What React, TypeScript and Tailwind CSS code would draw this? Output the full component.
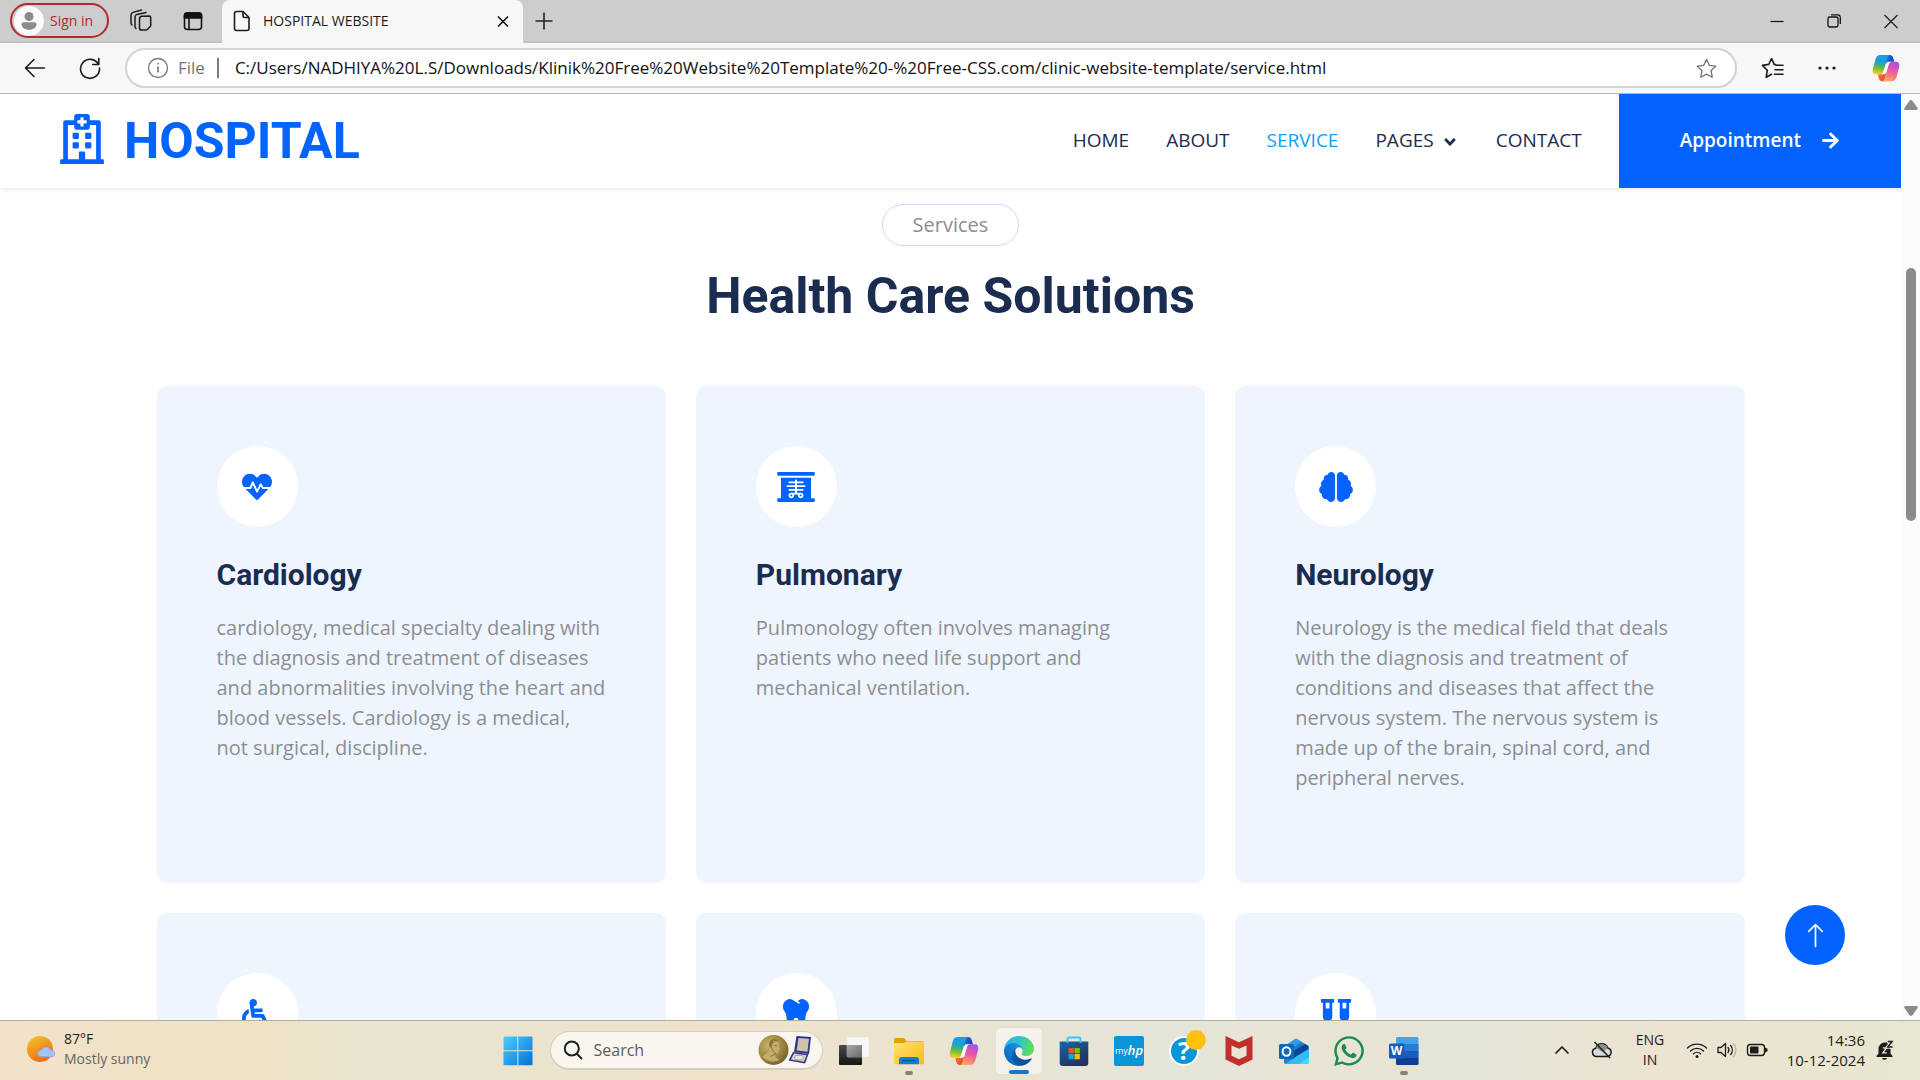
import React from "react";
import {
  FaRegHospital,
  FaHeartbeat,
  FaXRay,
  FaBrain,
  FaWheelchair,
  FaTooth,
  FaVials,
  FaArrowRight,
  FaAngleDown,
  FaWhatsapp,
} from "react-icons/fa";
import { BsArrowUp } from "react-icons/bs";

const ui = "font-['Open_Sans','Noto_Sans',sans-serif]";

function CopilotIcon({ id, className }: { id: string; className: string }) {
  return (
    <svg viewBox="0 0 32 32" className={className} aria-hidden="true">
      <defs>
        <linearGradient id={id + "a"} x1="0.5" y1="0" x2="0.35" y2="1">
          <stop offset="0" stopColor="#1a9df0" />
          <stop offset="0.35" stopColor="#1b9fd0" />
          <stop offset="0.65" stopColor="#5fb94d" />
          <stop offset="1" stopColor="#f6d20a" />
        </linearGradient>
        <linearGradient id={id + "b"} x1="0.7" y1="0" x2="0.4" y2="1">
          <stop offset="0" stopColor="#a44ff0" />
          <stop offset="0.5" stopColor="#ee5a9a" />
          <stop offset="1" stopColor="#ffa860" />
        </linearGradient>
        <linearGradient id={id + "c"} x1="0" y1="0" x2="1" y2="0.6">
          <stop offset="0" stopColor="#1387e6" />
          <stop offset="1" stopColor="#1f38c4" />
        </linearGradient>
        <linearGradient id={id + "d"} x1="0" y1="0" x2="1" y2="1">
          <stop offset="0" stopColor="#ff8a30" />
          <stop offset="1" stopColor="#dc3434" />
        </linearGradient>
      </defs>
      <path d="M17 1h3.500c1.900 0 3 1 3.600 2.900l1.400 5h-4.500c-2 0-3.200 1-3.800 3L15 7z" fill={`url(#${id}c)`} />
      <path d="M15 31h-3.500c-1.900 0-3-1-3.600-2.900l-1.400-5H11c2 0 3.200-1 3.800-3L17 25z" fill={`url(#${id}d)`} />
      <path d="M9.500 1h11.300c-1.600 0-2.500 1.200-3.100 3.200l-4.800 16.100c-.6 1.900-1.900 2.900-4 2.900H4.500C1 23.200.1 20 1.100 16.700l3-11.200C4.900 2.500 6.500 1 9.500 1z" fill={`url(#${id}a)`} />
      <path d="M22.500 31H11.200c1.600 0 2.500-1.200 3.100-3.200l4.800-16.100c.6-1.900 1.900-2.900 4-2.900h4.400c3.500 0 4.400 3.200 3.400 6.500l-3 11.200c-.8 3-2.400 4.500-5.400 4.500z" fill={`url(#${id}b)`} />
      <path d="M17.200 8.900h4.600c-1.400.4-2.200 1.400-2.700 2.900l-3.100 10.500-1.400.8h-3.300c1-.6 1.400-1.500 1.700-2.600z" fill="#fff" opacity="0.850" />
    </svg>
  );
}

function IconButton({ label, className = "", children }: { label: string; className?: string; children: React.ReactNode }) {
  return (
    <button type="button" aria-label={label} className={"flex shrink-0 items-center justify-center " + className}>
      {children}
    </button>
  );
}

function TabStrip() {
  return (
    <div className="flex h-[43px] shrink-0 items-stretch border-b-2 border-[#c2c2c2] bg-[#cdcdcd]">
      <div className="flex items-center pl-[10px]">
        <button type="button" className="flex h-[35px] w-[99px] items-center rounded-full border-2 border-[#b5292c] pl-[2px]">
          <span className="flex size-[30px] items-center justify-center rounded-full bg-[#fafafa]">
            <svg viewBox="0 0 20 20" className="size-[20px]" fill="#8b8b8b" aria-hidden="true">
              <circle cx="10" cy="5.500" r="4.500" />
              <path d="M2.500 13a1.800 1.800 0 0 1 1.800-1.800h11.400a1.800 1.800 0 0 1 1.800 1.800c0 3.400-3 5.800-7.500 5.800S2.500 16.400 2.500 13z" />
            </svg>
          </span>
          <span className="ml-[6px] whitespace-nowrap text-[14px] text-[#b5292c]">Sign in</span>
        </button>
        <IconButton label="Workspaces" className="ml-[20px] size-[24px]">
          <svg viewBox="0 0 24 24" className="size-[24px]" fill="none" stroke="#1b1b1b" strokeWidth="1.500" strokeLinejoin="round" strokeLinecap="round">
            <path d="M12.500 7.200l7.600-.2a1.600 1.600 0 0 1 1.600 1.600v7.700a2 2 0 0 1-.6 1.400l-2.800 2.800a2 2 0 0 1-1.400.6h-4.200a2.200 2.200 0 0 1-2.200-2.200V10a2.800 2.800 0 0 1 2-2.800z" />
            <path d="M7 19.500a2.500 2.500 0 0 1-1-2V8.200A3 3 0 0 1 8 5.400l9-2" />
            <path d="M3 16a2.500 2.500 0 0 1-1-2V6.200a3 3 0 0 1 2-2.800L12.500 1" />
          </svg>
        </IconButton>
        <IconButton label="Tab actions" className="ml-[28px] size-[24px]">
          <svg viewBox="0 0 24 24" className="size-[24px]" fill="none" stroke="#111" strokeWidth="1.600">
            <rect x="3.500" y="4" width="17" height="16.500" rx="3" />
            <path d="M3.500 9V6.500A2.500 2.500 0 0 1 6 4h12a2.500 2.500 0 0 1 2.500 2.500V9z" fill="#111" />
            <path d="M8 9v11" />
          </svg>
        </IconButton>
      </div>
      <div className="-mb-[2px] ml-[17px] flex w-[301px] items-center rounded-t-lg bg-[#f7f7f7] pr-[9px] pb-[2px] pl-[8px]">
        <svg viewBox="0 0 24 24" className="size-[24px]" fill="none" stroke="#1b1b1b" strokeWidth="1.600" strokeLinejoin="round" aria-hidden="true">
          <path d="M6.500 2.500H13l6 6v11a2 2 0 0 1-2 2H6.500a2 2 0 0 1-2-2v-15a2 2 0 0 1 2-2z" />
          <path d="M13 2.500v4a2 2 0 0 0 2 2h4" />
        </svg>
        <span className="ml-[9px] flex-1 whitespace-nowrap text-[14px] text-[#1b1b1b]">HOSPITAL WEBSITE</span>
        <IconButton label="Close tab" className="size-[22px]">
          <svg viewBox="0 0 22 22" className="size-[22px]" stroke="#111" strokeWidth="1.600">
            <path d="M6 6.500l10 10M16 6.500l-10 10" />
          </svg>
        </IconButton>
      </div>
      <IconButton label="New tab" className="ml-[9px] w-[24px]">
        <svg viewBox="0 0 24 24" className="size-[24px]" stroke="#222" strokeWidth="1.600">
          <path d="M3.500 12h17M12 3.500v17" />
        </svg>
      </IconButton>
      <div className="ml-auto flex pr-[1px]">
        <IconButton label="Minimise" className="w-[57px]">
          <svg viewBox="0 0 16 16" className="size-[16px]" stroke="#111" strokeWidth="1.200">
            <path d="M1.500 8.500h13" />
          </svg>
        </IconButton>
        <IconButton label="Restore" className="w-[57px]">
          <svg viewBox="0 0 16 16" className="size-[16px]" fill="none" stroke="#111" strokeWidth="1.300">
            <rect x="2" y="4" width="10" height="10" rx="1.800" />
            <path d="M5 1.800h6.500a2.800 2.800 0 0 1 2.800 2.800V11" />
          </svg>
        </IconButton>
        <IconButton label="Close window" className="w-[57px]">
          <svg viewBox="0 0 16 16" className="size-[16px]" stroke="#222" strokeWidth="1.300">
            <path d="M1.500 2l13 13M14.500 2l-13 13" />
          </svg>
        </IconButton>
      </div>
    </div>
  );
}

function AddressBar() {
  return (
    <div className="flex h-[51px] shrink-0 items-center border-b border-[#b9b9b9] bg-[#f7f7f7]">
      <IconButton label="Back" className="ml-[22px] size-[25px]">
        <svg viewBox="0 0 24 24" className="size-[24px]" fill="none" stroke="#1b1b1b" strokeWidth="1.600" strokeLinecap="round" strokeLinejoin="round">
          <path d="M21.500 12h-19M11 3.500L2.500 12l8.500 8.500" />
        </svg>
      </IconButton>
      <IconButton label="Refresh" className="ml-[30px] size-[25px]">
        <svg viewBox="0 0 24 24" className="size-[24px]" fill="none" stroke="#1b1b1b" strokeWidth="1.600" strokeLinecap="round" strokeLinejoin="round">
          <path d="M20.500 8.500A9.500 9.500 0 1 0 21.500 12M20.800 2.500v6h-6" />
        </svg>
      </IconButton>
      <div className="ml-[23px] flex h-[40px] flex-1 items-center rounded-full border-2 border-[#d2d2d2] bg-white pr-[17px] pl-[20px]">
        <svg viewBox="0 0 22 22" className="size-[22px] shrink-0" fill="none" stroke="#757575" strokeWidth="1.300" aria-hidden="true">
          <circle cx="11" cy="11" r="9.500" />
          <path d="M11 9.500v6M11 6v1.600" strokeWidth="1.600" />
        </svg>
        <span className="ml-[9px] text-[17px] text-[#757575]">File</span>
        <span className="mr-[16px] ml-[12px] h-[20px] w-[2px] bg-[#7d7d7d]" />
        <input
          aria-label="Address"
          readOnly
          value="C:/Users/NADHIYA%20L.S/Downloads/Klinik%20Free%20Website%20Template%20-%20Free-CSS.com/clinic-website-template/service.html"
          className="min-w-0 flex-1 bg-transparent text-[17px] text-[#111] outline-none"
        />
        <IconButton label="Add to favourites" className="size-[24px]">
          <svg viewBox="0 0 24 24" className="size-[23px]" fill="none" stroke="#757575" strokeWidth="1.400" strokeLinejoin="round">
            <path d="M12 2.500l2.900 6.200 6.800.9-5 4.700 1.300 6.800-6-3.300-6 3.300 1.300-6.800-5-4.700 6.800-.9z" />
          </svg>
        </IconButton>
      </div>
      <IconButton label="Favourites" className="ml-[24px] size-[24px]">
        <svg viewBox="0 0 24 24" className="size-[24px]" fill="none" stroke="#1b1b1b" strokeWidth="1.600" strokeLinejoin="round" strokeLinecap="round">
          <path d="M10.500 18.300l-5.300 3 1.100-7.100L1.500 9.400l6.300-1L10.500 2.500l2.700 5.900 1.500.2M15 9.200h7M14 13.700h8M13.500 18.300H22" />
        </svg>
      </IconButton>
      <IconButton label="Settings and more" className="ml-[29px] size-[26px]">
        <svg viewBox="0 0 24 24" className="size-[24px]" fill="#1b1b1b">
          <circle cx="5" cy="12" r="1.600" />
          <circle cx="12" cy="12" r="1.600" />
          <circle cx="19" cy="12" r="1.600" />
        </svg>
      </IconButton>
      <IconButton label="Copilot" className="mr-[20px] ml-[32px] size-[28px]">
        <CopilotIcon id="top" className="size-[28px]" />
      </IconButton>
    </div>
  );
}

const navLinks = ["HOME", "ABOUT", "SERVICE", "PAGES", "CONTACT"];

function SiteHeader() {
  return (
    <header className="relative flex h-[94px] items-stretch justify-between bg-white shadow-[0_2px_5px_rgba(0,0,0,0.08)]">
      <a href="#home" className="flex items-center gap-[20px] pl-[60px] text-[#0463fe]">
        <FaRegHospital className="mb-1 h-[50px] w-[44px]" />
        <span className="font-[Roboto,sans-serif] text-[50px] leading-[60px] font-bold">HOSPITAL</span>
      </a>
      <div className="flex items-stretch">
        <nav className="mr-[37px] flex items-center gap-[37px] pb-[2px] text-[19px] text-[#1b2c51]">
          {navLinks.map((link) => (
            <a key={link} href={"#" + link.toLowerCase()} className={link === "SERVICE" ? "text-[#0c9ffb]" : "flex items-center gap-[7px]"}>
              {link}
              {link === "PAGES" && <FaAngleDown className="mt-[3px] size-[18px]" />}
            </a>
          ))}
        </nav>
        <a href="#appointment" className="flex items-center gap-[20px] bg-[#0463fe] px-[61px] pb-[2px] text-[19px] font-semibold text-white">
          Appointment
          <FaArrowRight className="size-[19px]" />
        </a>
      </div>
    </header>
  );
}

type Service = { icon: React.ReactNode; title?: string; text?: string };

const services: Service[] = [
  {
    title: "Cardiology",
    text: "cardiology, medical specialty dealing with the diagnosis and treatment of diseases and abnormalities involving the heart and blood vessels. Cardiology is a medical, not surgical, discipline.",
    icon: <FaHeartbeat className="size-[30px]" />,
  },
  {
    title: "Pulmonary",
    text: "Pulmonology often involves managing patients who need life support and mechanical ventilation.",
    icon: <FaXRay className="h-[30px] w-[38px]" />,
  },
  {
    title: "Neurology",
    text: "Neurology is the medical field that deals with the diagnosis and treatment of conditions and diseases that affect the nervous system. The nervous system is made up of the brain, spinal cord, and peripheral nerves.",
    icon: <FaBrain className="h-[30px] w-[34px]" />,
  },
  { icon: <FaWheelchair className="size-[30px]" /> },
  { icon: <FaTooth className="size-[30px]" /> },
  { icon: <FaVials className="h-[30px] w-[38px]" /> },
];

function ServiceCard({ service }: { service: Service }) {
  return (
    <article className="rounded-[10px] bg-[#eef5ff] px-[60px] pt-[60px] pb-[90px]">
      <div className="flex size-[81px] items-center justify-center rounded-full bg-white text-[#0463fe]">{service.icon}</div>
      {service.title && (
        <h2 className="mt-[30px] font-[Roboto,sans-serif] text-[30px] leading-9 font-bold text-[#1b2c51]">{service.title}</h2>
      )}
      {service.text && <p className="mt-5 text-[20px] leading-[30px] text-[#8d8e92]">{service.text}</p>}
    </article>
  );
}

function Page() {
  return (
    <div className="relative flex min-h-0 flex-1 bg-white">
      <div className="min-w-0 flex-1 overflow-hidden">
        <SiteHeader />
        <main className="mx-auto flex max-w-[1588px] flex-col items-center">
          <p className="mt-4 rounded-full border border-[#c8dcfd] px-[30px] py-[5px] text-[20px] leading-[30px] text-[#8d8e92]">Services</p>
          <h1 className="mt-5 font-[Roboto,sans-serif] text-[50px] leading-[60px] font-bold text-[#1b2c51]">Health Care Solutions</h1>
          <section className="mt-[60px] grid w-full grid-cols-3 gap-[30px]">
            {services.map((s, i) => (
              <ServiceCard key={i} service={s} />
            ))}
          </section>
        </main>
      </div>
      <div className="flex w-[19px] shrink-0 flex-col items-center justify-between bg-[#fcfcfc] pt-[6px] pb-[4px]">
        <svg viewBox="0 0 14 10" className="h-[10px] w-[14px]" fill="#8b8b8b" aria-hidden="true">
          <path d="M7 0q1 0 1.600 1l5 7q.6 2-1.200 2H1.600Q-.2 10 .4 8l5-7Q6 0 7 0z" />
        </svg>
        <div className="mt-[158px] mb-auto h-[253px] w-[10px] rounded-full bg-[#8b8b8b]" />
        <svg viewBox="0 0 14 10" className="h-[10px] w-[14px]" fill="#8b8b8b" aria-hidden="true">
          <path d="M7 10q1 0 1.600-1l5-7q.6-2-1.200-2H1.600Q-.2 0 .4 2l5 7Q6 10 7 10z" />
        </svg>
      </div>
      <a href="#top" aria-label="Back to top" className="absolute right-[75px] bottom-[55px] flex size-[60px] items-center justify-center rounded-full bg-[#0463fe] text-white">
        <BsArrowUp className="size-[27px]" />
      </a>
    </div>
  );
}

function StartIcon() {
  return (
    <svg viewBox="0 0 30 30" className="size-[30px]" aria-hidden="true">
      <defs>
        <linearGradient id="start" x1="0" y1="0" x2="1" y2="1" gradientUnits="objectBoundingBox">
          <stop offset="0" stopColor="#4fcdff" />
          <stop offset="1" stopColor="#0071d4" />
        </linearGradient>
        <mask id="panes">
          <path d="M1.500.5h12.800v13.800H.5V1.500a1 1 0 0 1 1-1zM15.300.5h13.200a1 1 0 0 1 1 1v12.800H15.300zM.5 15.300h13.800v14H1.500a1 1 0 0 1-1-1zM15.300 15.300h14.200v13a1 1 0 0 1-1 1H15.300z" fill="#fff" />
        </mask>
      </defs>
      <rect width="30" height="30" fill="url(#start)" mask="url(#panes)" />
    </svg>
  );
}

function SearchArt() {
  return (
    <svg viewBox="0 0 56 32" className="h-[32px] w-[56px]" aria-hidden="true">
      <defs>
        <radialGradient id="medal" cx="0.35" cy="0.35" r="0.75">
          <stop offset="0" stopColor="#c9b36a" />
          <stop offset="0.6" stopColor="#9c8641" />
          <stop offset="1" stopColor="#6d5b26" />
        </radialGradient>
      </defs>
      <circle cx="16.500" cy="16" r="15" fill="url(#medal)" />
      <path d="M15 6.500c3-2 7-.5 7 3l-.5 3 1.800 2.700-1.700.8-.2 2.600c-.6 1.400-2.600.9-3.400 1.600l.6 3.200 4 2.400c-5 3-13 2-17-3.300 2.500-3 5.500-3.600 7.500-5.500-2-3-1.800-8.500 1.900-10.500z" fill="#c4ae6b" />
      <path d="M14.500 9c-1 3 .2 5 1 7l3.200 3.500-5 3M17.500 11.500h2.500" stroke="#7d6a32" strokeWidth="1" fill="none" />
      <path d="M12.500 8.500c1-4 7.500-5 9.500-.8l-5-.7-2 4-2 3c-1-1.700-1.100-3.800-.5-5.500z" fill="#8a7638" />
      <path d="M39.500 2l14.500 1-2 17-15-2z" fill="#2b3583" />
      <path d="M41.500 4l10.500.8-1.500 13-11-1.400z" fill="#cfc0b0" />
      <path d="M36 18l15.500 2-3.500 9.500-16.500-3z" fill="#2b3583" />
      <path d="M37 19.500l12.500 1.700-2.600 6.600-13-2.300z" fill="#d8d3cc" />
      <ellipse cx="42" cy="23.600" rx="4.500" ry="2.400" fill="#e9e4da" stroke="#8d8577" strokeWidth="0.700" />
    </svg>
  );
}

function TaskViewIcon() {
  return (
    <svg viewBox="0 0 30 30" className="size-[30px]" aria-hidden="true">
      <defs>
        <linearGradient id="tvb" x1="0" y1="0" x2="0" y2="1">
          <stop offset="0" stopColor="#4a4a4a" />
          <stop offset="1" stopColor="#161616" />
        </linearGradient>
        <linearGradient id="tvo" x1="0" y1="0" x2="1" y2="1">
          <stop offset="0" stopColor="#a8a8a8" />
          <stop offset="1" stopColor="#6b6b6b" />
        </linearGradient>
      </defs>
      <rect x="0" y="9" width="23" height="20" rx="1" fill="url(#tvb)" />
      <rect x="8" y="1" width="22" height="20" rx="1" fill="#f7f7f7" stroke="#dcdcdc" strokeWidth="0.500" />
      <rect x="8" y="9" width="15" height="12" fill="url(#tvo)" />
    </svg>
  );
}

function FolderIcon() {
  return (
    <svg viewBox="0 0 30 30" className="size-[30px]" aria-hidden="true">
      <defs>
        <linearGradient id="fold" x1="0" y1="0" x2="1" y2="1">
          <stop offset="0" stopColor="#ffe07a" />
          <stop offset="1" stopColor="#fbbb12" />
        </linearGradient>
      </defs>
      <path d="M0 3.500A1.500 1.500 0 0 1 1.500 2H10l3 3h15.500A1.500 1.500 0 0 1 30 6.500V12H0z" fill="#e2a100" />
      <path d="M0 7h10l3-1.500h17v21.500a1.200 1.200 0 0 1-1.200 1.200H1.200A1.200 1.200 0 0 1 0 27z" fill="url(#fold)" />
      <path d="M5 28.200V24a3 3 0 0 1 3-3h14a3 3 0 0 1 3 3v4.200z" fill="#0c7fd0" />
      <path d="M8.500 24.600h13" stroke="#064f8c" strokeWidth="1.200" />
    </svg>
  );
}

function EdgeIcon() {
  return (
    <svg viewBox="0 0 256 256" className="size-[30px]" aria-hidden="true">
      <defs>
        <linearGradient id="e1" x1="0.2" y1="0.5" x2="1" y2="0.6">
          <stop offset="0" stopColor="#0c59a4" />
          <stop offset="1" stopColor="#114a8b" />
        </linearGradient>
        <linearGradient id="e2" x1="0.9" y1="0.1" x2="0.3" y2="0.9">
          <stop offset="0" stopColor="#1b9de2" />
          <stop offset="0.5" stopColor="#0f7fd6" />
          <stop offset="1" stopColor="#0669bd" />
        </linearGradient>
        <linearGradient id="e3" x1="0" y1="0.3" x2="1" y2="0.55">
          <stop offset="0" stopColor="#2cb1e6" />
          <stop offset="0.5" stopColor="#2fc6c4" />
          <stop offset="1" stopColor="#64e054" />
        </linearGradient>
      </defs>
      <path transform="translate(-4.630 -4.920)" fill="url(#e1)" d="M235.680 195.460a93.730 93.730 0 0 1-10.540 4.710 101.870 101.870 0 0 1-35.900 6.460c-47.320 0-88.540-32.550-88.540-74.320A31.480 31.480 0 0 1 117.130 105c-42.800 1.800-53.800 46.400-53.800 72.530 0 73.880 68.090 81.370 82.760 81.370 7.910 0 19.840-2.300 27-4.560l1.310-.440a128.340 128.340 0 0 0 66.600-52.800 4 4 0 0 0-5.320-5.640z" />
      <path transform="translate(-4.630 -4.920)" fill="url(#e2)" d="M110.340 246.340A79.200 79.200 0 0 1 87.600 225a80.720 80.720 0 0 1 29.530-120c3.120-1.470 8.450-4.130 15.540-4a32.350 32.350 0 0 1 25.690 13 31.880 31.880 0 0 1 6.360 18.660c0-.210 24.460-79.600-80-79.600-43.900 0-80 41.660-80 78.210a130.150 130.150 0 0 0 12.110 56 128 128 0 0 0 156.380 67.110 75.550 75.550 0 0 1-62.780-8z" />
      <path fill="url(#e3)" d="M152.330 148.860c-.810 1.050-3.300 2.500-3.300 5.660 0 2.610 1.700 5.120 4.720 7.230 14.380 10 41.490 8.680 41.560 8.680a59.560 59.560 0 0 0 30.270-8.350A61.380 61.380 0 0 0 256 109.200c.260-22.410-8-37.310-11.340-43.910C223.460 23.840 177.720 0 128 0A128 128 0 0 0 0 126.200c.480-36.540 36.800-66.050 80-66.050 3.500 0 23.460.340 42 10.070 16.340 8.580 24.900 18.940 30.850 29.210 6.180 10.670 7.280 24.150 7.280 29.520s-2.740 13.330-7.800 19.910z" />
    </svg>
  );
}

function StoreIcon() {
  return (
    <svg viewBox="0 0 30 30" className="size-[30px]" aria-hidden="true">
      <defs>
        <linearGradient id="store" x1="0" y1="0" x2="0.6" y2="1">
          <stop offset="0" stopColor="#1267a8" />
          <stop offset="1" stopColor="#27305a" />
        </linearGradient>
      </defs>
      <path d="M.7 5.500h28.600V27a3 3 0 0 1-3 3H3.700a3 3 0 0 1-3-3z" fill="url(#store)" />
      <path d="M8.500 7V3A1.500 1.500 0 0 1 10 1.500h10A1.500 1.500 0 0 1 21.500 3v4" fill="none" stroke="#3cc3f5" strokeWidth="1.800" />
      <rect x="9.500" y="12" width="5.300" height="5.300" fill="#f25022" />
      <rect x="15.500" y="12" width="5.300" height="5.300" fill="#7fba00" />
      <rect x="9.500" y="18" width="5.300" height="5.300" fill="#00a4ef" />
      <rect x="15.500" y="18" width="5.300" height="5.300" fill="#ffb900" />
    </svg>
  );
}

function HpIcon() {
  return (
    <span className="flex size-[30px] items-center justify-center rounded-[2px] bg-[#0a96d6] text-[9px] leading-none text-white">
      my<b className="text-[13px] leading-none font-semibold italic">hp</b>
    </span>
  );
}

function HelpIcon() {
  return (
    <span className="relative flex size-[30px] items-center justify-center rounded-full border-2 border-white bg-[#0a96d6] text-[25px] leading-none font-bold text-white">
      ?
      <span className="absolute -top-[8px] -right-[9px] size-[20px] rounded-full bg-[#ffbf0d]" />
    </span>
  );
}

function McAfeeIcon() {
  return (
    <svg viewBox="0 0 28 30" className="h-[30px] w-[28px]" aria-hidden="true">
      <path d="M.5 0L14 6.200 27.500 0v23.500L14 30 .5 23.500z" fill="#c1302c" />
      <path d="M6.500 9.500l7.500 3.200 7.500-3.200v10.200L14 23.200l-7.500-3.500z" fill="#ebe4d3" />
    </svg>
  );
}

function OutlookIcon() {
  return (
    <svg viewBox="0 0 30 30" className="size-[30px]" aria-hidden="true">
      <path d="M5 10.500L17 2.500l12.500 7.500v16a2 2 0 0 1-2 2H7a2 2 0 0 1-2-2z" fill="#1a7fd4" />
      <path d="M5 10.500L17 2.500l5.500 3.300L9 15z" fill="#2e9fe6" />
      <path d="M8 19L26 8l3.500 2v4L14 24z" fill="#0a4494" />
      <path d="M30 13v13a2 2 0 0 1-2 2H6.500L18 20z" fill="#48d6fb" />
      <path d="M30 13v8L20 28H6.500L18 20z" fill="#2ba9ea" opacity="0.600" />
      <rect x="0" y="8" width="15" height="15" rx="1.500" fill="#0f68bd" />
      <ellipse cx="7.500" cy="15.500" rx="3.900" ry="4.300" fill="none" stroke="#fff" strokeWidth="2" />
    </svg>
  );
}

function WordIcon() {
  return (
    <span className="relative block size-[30px]">
      <svg viewBox="0 0 30 30" className="size-[30px]" aria-hidden="true">
        <rect x="7" y="1" width="22.500" height="28" rx="1.500" fill="#41a5ee" />
        <path d="M7 8h22.500v7H7z" fill="#2b7cd3" />
        <path d="M7 15h22.500v7H7z" fill="#185abd" />
        <path d="M7 22h22.500v5.500A1.500 1.500 0 0 1 28 29H8.500A1.500 1.500 0 0 1 7 27.500z" fill="#103f91" />
        <rect x="0" y="7.500" width="15.500" height="15" rx="1.500" fill="#185abd" />
      </svg>
      <span className="absolute top-[8px] left-0 flex h-[15px] w-[15px] items-center justify-center text-[12px] leading-none font-bold text-white">W</span>
    </span>
  );
}

const apps: { label: string; icon: React.ReactNode; state?: "open" | "active" }[] = [
  { label: "Task view", icon: <TaskViewIcon /> },
  { label: "File Explorer", icon: <FolderIcon />, state: "open" },
  { label: "Copilot", icon: <CopilotIcon id="bar" className="size-[30px]" /> },
  { label: "Edge", icon: <EdgeIcon />, state: "active" },
  { label: "Microsoft Store", icon: <StoreIcon /> },
  { label: "myHP", icon: <HpIcon /> },
  { label: "HP Support", icon: <HelpIcon /> },
  { label: "McAfee", icon: <McAfeeIcon /> },
  { label: "Outlook", icon: <OutlookIcon /> },
  { label: "WhatsApp", icon: <FaWhatsapp className="size-[34px] text-[#1f8a50]" /> },
  { label: "Word", icon: <WordIcon />, state: "open" },
];

function Taskbar() {
  return (
    <footer className="grid h-[60px] shrink-0 grid-cols-[1fr_auto_1fr] items-center border-t border-[#b3ad9f] bg-[linear-gradient(90deg,#f2e2c9_0%,#ede3c6_13%,#e9e3d0_20%,#ebe3cd_30%,#efe2cb_38%,#e9e4d2_50%,#e4e5d9_62%,#e9e4d3_68%,#e4e5d6_76%,#ece3d1_86%,#e8e7d0_100%)] text-[#1c1c1c]">
      <button type="button" className="flex items-center pb-[3px] pl-[27px] text-left">
        <svg viewBox="0 0 28 28" className="size-[28px]" aria-hidden="true">
          <defs>
            <linearGradient id="sun" x1="0.2" y1="0" x2="0.7" y2="1">
              <stop offset="0" stopColor="#efc02f" />
              <stop offset="1" stopColor="#f2660f" />
            </linearGradient>
          </defs>
          <circle cx="13" cy="14" r="13" fill="url(#sun)" />
          <path d="M13.500 21.800a3.300 3.300 0 0 1-.2-6.500c.8-.1 1.200-.2 1.700-.9a4.700 4.700 0 0 1 8.700.9c3 .1 4.300 1.600 4.300 3.300s-1.300 3.200-3.200 3.200z" fill="#a3c3fb" stroke="#7f9fe6" strokeWidth="0.700" />
        </svg>
        <span className="ml-[9px] flex flex-col text-[14px] leading-5">
          <span>87°F</span>
          <span className="text-[#69655c]">Mostly sunny</span>
        </span>
      </button>
      <div className="flex h-full items-center pl-[2px]">
        <IconButton label="Start" className="h-[48px] w-[55px]">
          <StartIcon />
        </IconButton>
        <label className="mx-[4px] flex h-[39px] w-[273px] items-center rounded-full border border-b-2 border-[#d5cebf] bg-[#f9f6f0] pr-[9px] pl-[12px]">
          <svg viewBox="0 0 20 20" className="size-[20px] shrink-0" fill="none" stroke="#1f1f1f" strokeWidth="2" strokeLinecap="round" aria-hidden="true">
            <circle cx="8.800" cy="8.500" r="7" />
            <path d="M14 14l4.500 4.500" />
          </svg>
          <input aria-label="Search" placeholder="Search" className="ml-[11px] w-0 min-w-0 flex-1 bg-transparent text-[16px] outline-none placeholder:text-[#5e5c58]" />
          <SearchArt />
        </label>
        {apps.map((app) => (
          <button key={app.label} type="button" aria-label={app.label} className="flex h-[48px] w-[55px] justify-center">
            <span
              className={
                app.state === "active"
                  ? "relative flex size-[48px] items-center justify-center rounded-md border border-[#e6e0d4] bg-[#f5f2eb]"
                  : "relative flex size-[48px] items-center justify-center"
              }
            >
              {app.icon}
              {app.state === "open" && <span className="absolute bottom-0 h-[4px] w-[8px] rounded-full bg-[#85827a]" />}
              {app.state === "active" && <span className="absolute bottom-0 h-[4px] w-[20px] rounded-full bg-[#0f78d4]" />}
            </span>
          </button>
        ))}
      </div>
      <div className="flex items-center justify-end pr-[25px] pb-[2px] text-[14px] leading-5">
        <IconButton label="Hidden icons" className="size-[16px]">
          <svg viewBox="0 0 16 16" className="size-[16px]" fill="none" stroke="#1c1c1c" strokeWidth="1.700" strokeLinecap="round" strokeLinejoin="round">
            <path d="M2 11l6-6 6 6" />
          </svg>
        </IconButton>
        <IconButton label="OneDrive" className="ml-[21px] size-[22px]">
          <svg viewBox="0 0 22 18" className="h-[18px] w-[22px]" strokeLinejoin="round">
            <path d="M5.500 15.500a4.200 4.200 0 0 1-.7-8.300 6.300 6.300 0 0 1 12-.3 4.400 4.400 0 0 1-.3 8.600z" fill="#d9d9d9" stroke="#1c1c1c" strokeWidth="1.500" />
            <path d="M5 7a6.200 6.200 0 0 1 11.500 0L12 11z" fill="#8a8a8a" />
            <path d="M3.500 1l15.500 16" stroke="#1c1c1c" strokeWidth="1.500" />
          </svg>
        </IconButton>
        <button type="button" className="ml-[21px] w-[32px] text-center">
          ENG
          <br />
          IN
        </button>
        <button type="button" aria-label="Network, volume and battery" className="ml-[20px] flex items-center gap-[9px]">
          <svg viewBox="0 0 22 18" className="h-[18px] w-[22px]" fill="none" stroke="#1c1c1c" strokeWidth="1.400" strokeLinecap="round">
            <path d="M1.500 7a13.500 13.500 0 0 1 19 0M4.500 10a9.300 9.300 0 0 1 13 0M7.500 12.800a5 5 0 0 1 7 0" />
            <circle cx="11" cy="15.500" r="1.500" fill="#1c1c1c" stroke="none" />
          </svg>
          <svg viewBox="0 0 20 18" className="h-[18px] w-[20px]" fill="none" stroke="#1c1c1c" strokeWidth="1.300" strokeLinecap="round" strokeLinejoin="round">
            <path d="M1 6.500h3L8.500 2.500v13L4 11.500H1z" />
            <path d="M11 6.500a4 4 0 0 1 0 5M13.700 4.500a7 7 0 0 1 0 9" />
            <path d="M16.500 2.500a10 10 0 0 1 0 13" stroke="#b9b5aa" />
          </svg>
          <svg viewBox="0 0 22 16" className="h-[16px] w-[22px]" aria-hidden="true">
            <rect x="1.500" y="2.500" width="17" height="11" rx="3" fill="none" stroke="#1c1c1c" strokeWidth="1.400" />
            <rect x="4" y="4.500" width="8.500" height="7" rx="1" fill="#1c1c1c" />
            <path d="M19 5.500l2.500 1.200v2.600L19 10.500z" fill="#1c1c1c" />
          </svg>
        </button>
        <button type="button" className="ml-[18px] w-[79px] text-right text-[15px] leading-5 whitespace-nowrap">
          14:36
          <br />
          10-12-2024
        </button>
        <IconButton label="Notifications" className="ml-[10px] size-[20px]">
          <svg viewBox="0 0 20 22" className="h-[22px] w-[20px]" aria-hidden="true">
            <path d="M3.500 10a6.200 6.200 0 0 1 6.200-6.500H12l3.500 6V14.500l2 2.600v.9H1.500v-.9l2-2.600z" fill="#1c1c1c" />
            <path d="M7 18.900h5a2.600 2.600 0 0 1-5 0z" fill="#1c1c1c" />
            <path d="M7.800 8.800h3.700l-3.700 5h4" stroke="#e9e6d1" strokeWidth="1.300" fill="none" />
            <path d="M12.800 2.500h4.400l-4.400 5.500h4.800" stroke="#e8e6d1" strokeWidth="3.600" fill="none" />
            <path d="M12.800 2.500h4.200l-4.200 5.500h4.800" stroke="#1c1c1c" strokeWidth="1.500" fill="none" />
          </svg>
        </IconButton>
      </div>
    </footer>
  );
}

export default function App() {
  return (
    <div className={"flex h-screen flex-col overflow-hidden " + ui}>
      <TabStrip />
      <AddressBar />
      <Page />
      <Taskbar />
    </div>
  );
}
